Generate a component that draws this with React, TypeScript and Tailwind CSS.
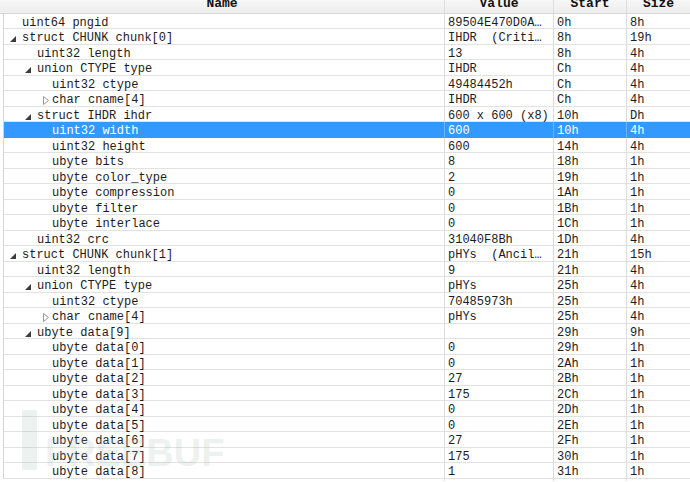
import React from "react";

// One row of the template results: level, expander, name, value, start, size
type Row = [number, "open" | "closed" | null, string, string, string, string];

const rows: Row[] = [
  [0, null, "uint64 pngid", "89504E470D0A…", "0h", "8h"],
  [0, "open", "struct CHUNK chunk[0]", "IHDR  (Criti…", "8h", "19h"],
  [1, null, "uint32 length", "13", "8h", "4h"],
  [1, "open", "union CTYPE type", "IHDR", "Ch", "4h"],
  [2, null, "uint32 ctype", "49484452h", "Ch", "4h"],
  [2, "closed", "char cname[4]", "IHDR", "Ch", "4h"],
  [1, "open", "struct IHDR ihdr", "600 x 600 (x8)", "10h", "Dh"],
  [2, null, "uint32 width", "600", "10h", "4h"],
  [2, null, "uint32 height", "600", "14h", "4h"],
  [2, null, "ubyte bits", "8", "18h", "1h"],
  [2, null, "ubyte color_type", "2", "19h", "1h"],
  [2, null, "ubyte compression", "0", "1Ah", "1h"],
  [2, null, "ubyte filter", "0", "1Bh", "1h"],
  [2, null, "ubyte interlace", "0", "1Ch", "1h"],
  [1, null, "uint32 crc", "31040F8Bh", "1Dh", "4h"],
  [0, "open", "struct CHUNK chunk[1]", "pHYs  (Ancil…", "21h", "15h"],
  [1, null, "uint32 length", "9", "21h", "4h"],
  [1, "open", "union CTYPE type", "pHYs", "25h", "4h"],
  [2, null, "uint32 ctype", "70485973h", "25h", "4h"],
  [2, "closed", "char cname[4]", "pHYs", "25h", "4h"],
  [1, "open", "ubyte data[9]", "", "29h", "9h"],
  [2, null, "ubyte data[0]", "0", "29h", "1h"],
  [2, null, "ubyte data[1]", "0", "2Ah", "1h"],
  [2, null, "ubyte data[2]", "27", "2Bh", "1h"],
  [2, null, "ubyte data[3]", "175", "2Ch", "1h"],
  [2, null, "ubyte data[4]", "0", "2Dh", "1h"],
  [2, null, "ubyte data[5]", "0", "2Eh", "1h"],
  [2, null, "ubyte data[6]", "27", "2Fh", "1h"],
  [2, null, "ubyte data[7]", "175", "30h", "1h"],
  [2, null, "ubyte data[8]", "1", "31h", "1h"],
];

const indent = ["pl-[6px]", "pl-[21px]", "pl-[36px]"];
const SELECTED = 7;

const Expander = ({ kind, selected }: { kind: Row[1]; selected: boolean }) => {
  if (kind === "open") {
    return (
      <svg width="6" height="6" viewBox="0 0 6 6" className="mt-[1px]">
        <polygon points="6,0 6,6 0,6" fill={selected ? "#ffffff" : "#3c3c3c"} />
      </svg>
    );
  }
  if (kind === "closed") {
    return (
      <svg width="6" height="9" viewBox="0 0 6 9" className="ml-[3px]">
        <polygon points="0.5,0.5 5.5,4.5 0.5,8.5" fill="none" stroke="#9a9a9a" strokeWidth="1" />
      </svg>
    );
  }
  return null;
};

export default function App() {
  return (
    <div
      className="relative w-[690px] h-[482px] overflow-hidden bg-white text-[12px] text-[#1c1c1c]"
      style={{ fontFamily: '"Liberation Mono", "DejaVu Sans Mono", monospace' }}
    >
      {/* Column header */}
      <div className="grid grid-cols-[444px_109px_73px_64px] h-[14px] bg-gradient-to-b from-[#f7f7f7] to-[#ededed] border-b border-[#d6d6d6] font-bold text-[13px] text-[#111]">
        {["Name", "Value", "Start", "Size"].map((h, i) => (
          <div
            key={h}
            className={`flex justify-center items-start leading-[11px] overflow-hidden ${i > 0 ? "border-l border-[#dcdcdc]" : ""}`}
          >
            <span className="-mt-[2px]">{h}</span>
          </div>
        ))}
      </div>

      {/* Rows */}
      <div className="ml-[3px] border-l border-[#d4d4d4]">
        {rows.map(([level, kind, name, value, start, size], i) => {
          const sel = i === SELECTED;
          return (
            <div
              key={i}
              className={`grid grid-cols-[440px_109px_73px_64px] border-b ${i % 2 === 0 ? "h-[15px]" : "h-[16px]"} ${
                sel ? "bg-[#3399ff] text-white border-[#3399ff]" : "border-[#e2e2e2]"
              }`}
            >
              <div className={`flex items-center whitespace-pre ${indent[level]}`}>
                <span className="w-[12px] flex items-center shrink-0">
                  <Expander kind={kind} selected={sel} />
                </span>
                {name}
              </div>
              <div className={`flex items-center pl-[3px] whitespace-pre overflow-hidden border-l ${sel ? "border-[#6db3ff]" : "border-[#dcdcdc]"}`}>
                {value}
              </div>
              <div className={`flex items-center pl-[3px] border-l ${sel ? "border-[#6db3ff]" : "border-[#dcdcdc]"}`}>
                {start}
              </div>
              <div className={`flex items-center pl-[3px] border-l ${sel ? "border-[#6db3ff]" : "border-[#dcdcdc]"}`}>
                {size}
              </div>
            </div>
          );
        })}
      </div>

      {/* Faint site watermark */}
      <div
        className="pointer-events-none absolute left-[22px] top-[410px] flex items-end gap-[8px] text-[#a9c2b8] opacity-20 font-bold"
        style={{ fontFamily: '"Liberation Sans", Arial, sans-serif' }}
      >
        <div className="w-[15px] h-[60px] bg-[#a9c2b8]" />
        <span className="text-[38px] leading-[34px]">FREEBUF</span>
      </div>
    </div>
  );
}
